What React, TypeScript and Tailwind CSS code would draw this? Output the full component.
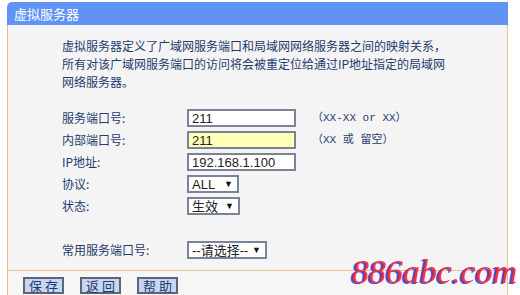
import React from "react";

const labelFont = "font-['Noto_Sans_CJK_SC',sans-serif]";

function TextBox({ value, yellow }: { value: string; yellow?: boolean }) {
  return (
    <div
      className={`w-[109px] h-[18px] border-2 border-[#7b8496] flex items-center pl-[3px] text-[13px] leading-none text-[#222] font-['Liberation_Sans',sans-serif] ${
        yellow ? "bg-[#ffffb8]" : "bg-white"
      }`}
    >
      {value}
    </div>
  );
}

function Select({ value, width }: { value: string; width: string }) {
  return (
    <div
      className={`${width} h-[18px] border-2 border-[#7b8496] bg-white flex items-center justify-between pl-[3px] pr-[4px] text-[13px] leading-none text-[#222] font-['Liberation_Sans','Noto_Sans_CJK_SC',sans-serif]`}
    >
      <span>{value}</span>
      <span className="text-[9px] text-[#111]">▼</span>
    </div>
  );
}

export default function App() {
  const rows = [
    { label: "服务端口号:", field: <TextBox value="211" />, hint: "（XX-XX or XX）" },
    { label: "内部端口号:", field: <TextBox value="211" yellow />, hint: "（XX 或 留空）" },
    { label: "IP地址:", field: <TextBox value="192.168.1.100" /> },
    { label: "协议:", field: <Select value="ALL" width="w-[52px]" /> },
    { label: "状态:", field: <Select value="生效" width="w-[53px]" /> },
  ];

  return (
    <div className="relative w-[520px] h-[295px] bg-white overflow-hidden pt-[2px] pl-[7px]">
      <div className="w-[501px] flex flex-col">
        {/* Title bar */}
        <div className="h-[23px] bg-[#6193f4] rounded-tl-[5px] flex items-center pl-[7px]">
          <span className={`text-[13px] text-white ${labelFont}`}>虚拟服务器</span>
        </div>

        {/* Body */}
        <div className={`bg-[#f4f4f4] border-x border-[#e5c28b] h-[245px] pt-[12px] pl-[54px] text-[#1f3b6d] text-[12px] ${labelFont}`}>
          <p className="leading-[18px]">
            虚拟服务器定义了广域网服务端口和局域网网络服务器之间的映射关系，
            <br />
            所有对该广域网服务端口的访问将会被重定位给通过IP地址指定的局域网
            <br />
            网络服务器。
          </p>

          <div className="mt-[16px] flex flex-col">
            {rows.map((r) => (
              <div key={r.label} className="h-[22px] flex items-center">
                <span className="w-[125px]">{r.label}</span>
                {r.field}
                {r.hint && (
                  <span className="ml-[16px] text-[11px] font-['Liberation_Mono','Noto_Sans_CJK_SC',monospace]">
                    {r.hint}
                  </span>
                )}
              </div>
            ))}
            <div className="h-[22px]" />
            <div className="h-[22px] flex items-center">
              <span className="w-[125px]">常用服务端口号:</span>
              <Select value="--请选择--" width="w-[80px]" />
            </div>
          </div>
        </div>

        {/* Button bar */}
        <div className="h-[26px] bg-[#f6f6f6] border-x border-t border-[#e5c28b] flex items-start pt-[6px] pl-[15px] gap-[16px]">
          {["保存", "返回", "帮助"].map((b) => (
            <button
              key={b}
              className={`w-[41px] h-[17px] bg-[#c9d6f3] border-2 border-[#5d6676] flex items-center justify-center text-[13px] leading-none tracking-[3px] pl-[3px] text-[#1f3b6d] ${labelFont}`}
            >
              {b}
            </button>
          ))}
        </div>
      </div>

      {/* Watermark */}
      <div className="absolute left-[352px] top-[255px] text-[34px] leading-none italic text-[#f2343f] font-['Liberation_Serif',serif] [text-shadow:-2px_1px_0_#4450e8]">
        886abc.com
      </div>
    </div>
  );
}
